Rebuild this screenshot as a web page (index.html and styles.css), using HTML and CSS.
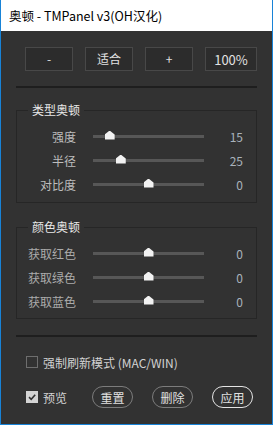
FILE: index.html
```html
<!DOCTYPE html>
<html lang="zh-CN">
<head>
<meta charset="utf-8">
<title>奥顿 - TMPanel v3(OH汉化)</title>
<link rel="stylesheet" href="styles.css">
</head>
<body>
<div class="window">
  <div class="titlebar">奥顿 - TMPanel v3(OH汉化)</div>
  <div class="panel">
    <div class="toolbar">
      <button class="tbtn">-</button>
      <button class="tbtn">适合</button>
      <button class="tbtn">+</button>
      <button class="tbtn wide">100%</button>
    </div>
    <div class="sep"></div>
    <fieldset class="group first">
      <legend>类型奥顿</legend>
      <div class="row"><span class="label">强度</span><div class="track"><span class="thumb" style="left:15%"></span></div><span class="value">15</span></div>
      <div class="row"><span class="label">半径</span><div class="track"><span class="thumb" style="left:25%"></span></div><span class="value">25</span></div>
      <div class="row"><span class="label">对比度</span><div class="track"><span class="thumb" style="left:50%"></span></div><span class="value">0</span></div>
    </fieldset>
    <fieldset class="group second">
      <legend>颜色奥顿</legend>
      <div class="row"><span class="label">获取红色</span><div class="track"><span class="thumb" style="left:50%"></span></div><span class="value">0</span></div>
      <div class="row"><span class="label">获取绿色</span><div class="track"><span class="thumb" style="left:50%"></span></div><span class="value">0</span></div>
      <div class="row"><span class="label">获取蓝色</span><div class="track"><span class="thumb" style="left:50%"></span></div><span class="value">0</span></div>
    </fieldset>
    <div class="sep sep2"></div>
    <label class="check-row">
      <span class="box"></span>
      <span class="check-text">强制刷新模式 (MAC/WIN)</span>
    </label>
    <div class="bottom-row">
      <label class="check-row inline">
        <span class="box checked"><svg width="10" height="10" viewBox="0 0 10 10"><path d="M2 5.2 L4.2 7.3 L8.2 2.8" fill="none" stroke="#333" stroke-width="1.6"/></svg></span>
        <span class="check-text">预览</span>
      </label>
      <button class="pill">重置</button>
      <button class="pill">删除</button>
      <button class="pill primary">应用</button>
    </div>
  </div>
</div>
</body>
</html>
```
FILE: styles.css
```css
html, body {
  margin: 0;
  padding: 0;
  background: #ffffff;
}
body {
  font-family: "Noto Sans CJK SC", "Microsoft YaHei", "Noto Sans", sans-serif;
}
.window {
  width: 273px;
  height: 425px;
  box-sizing: border-box;
  border: 1px solid #1883d7;
  border-top: none;
  display: flex;
  flex-direction: column;
  background: #323232;
}
.titlebar {
  height: 31px;
  flex: none;
  background: #ffffff;
  color: #000000;
  font-size: 12.5px;
  padding-left: 8px;
  display: flex;
  align-items: center;
}
.panel {
  flex: 1;
  padding-top: 16px;
  display: flex;
  flex-direction: column;
}
.toolbar {
  display: flex;
  gap: 12px;
  padding-left: 24px;
}
.tbtn {
  width: 48px;
  height: 24px;
  box-sizing: border-box;
  background: #2c2c2c;
  border: 1px solid #484848;
  color: #e2e2e2;
  font-family: inherit;
  font-size: 12px;
  padding: 0;
  line-height: 1;
}
.tbtn.wide {
  width: 52px;
  font-size: 13px;
}
.sep {
  height: 2px;
  background: #1e1e1e;
  margin: 15px 15px 0;
}
.group {
  margin: 14px 15px 0;
  padding: 6px 0 6px;
  border: 1px solid #262626;
  min-width: 0;
}
.group.second {
  margin-top: 16px;
  padding-bottom: 5px;
}
.group legend {
  margin-left: 11px;
  padding: 0 4px;
  font-size: 12px;
  line-height: 16px;
  color: #e8e8e8;
}
.row {
  display: flex;
  align-items: center;
  height: 24px;
  font-size: 12px;
}
.label {
  width: 59px;
  text-align: right;
  color: #bdbdbd;
}
.second .label {
  color: #ababab;
}
.track {
  position: relative;
  width: 111px;
  height: 3px;
  margin-left: 17px;
  background: #575757;
}
.thumb {
  position: absolute;
  top: -4px;
  width: 10px;
  height: 9px;
  margin-left: -5px;
  background: #f2f2f2;
  clip-path: polygon(50% 0, 100% 45%, 100% 100%, 0 100%, 0 45%);
}
.value {
  width: 39px;
  text-align: right;
  color: #a9b2bb;
}
.sep2 {
  margin-top: 16px;
}
.check-row {
  display: flex;
  align-items: center;
  height: 20px;
  margin: 15px 0 0 25px;
  font-size: 12px;
  color: #d2d2d2;
}
.box {
  width: 12px;
  height: 12px;
  box-sizing: border-box;
  border: 1px solid #6e6e6e;
  display: flex;
  align-items: center;
  justify-content: center;
}
.box.checked {
  background: #d4d4d4;
  border-color: #d4d4d4;
}
.check-text {
  margin-left: 5px;
}
.bottom-row {
  display: flex;
  align-items: center;
  margin-top: 14px;
  height: 22px;
}
.check-row.inline {
  margin: 0 0 0 25px;
  width: 66px;
}
.pill {
  width: 41px;
  height: 22px;
  box-sizing: border-box;
  border: 1px solid #7c7c7c;
  border-radius: 11px;
  background: transparent;
  color: #e0e0e0;
  font-family: inherit;
  font-size: 12px;
  padding: 0;
  margin-right: 19px;
}
.pill.primary {
  border-color: #e4e4e4;
  margin-right: 0;
}
```
